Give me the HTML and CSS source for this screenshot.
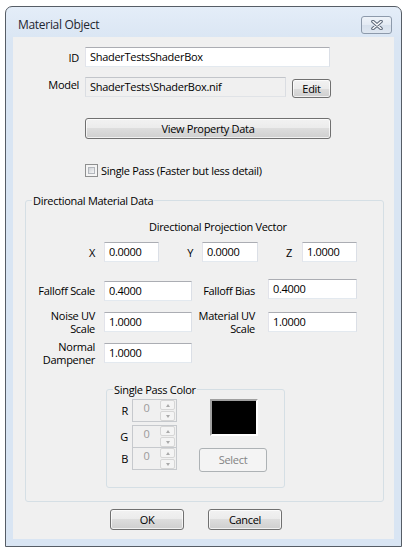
FILE: index.html
```html
<!DOCTYPE html>
<html>
<head>
<meta charset="utf-8">
<link rel="stylesheet" href="styles.css">
</head>
<body>
<div class="window">
  <div class="titlebar">
    <span class="title">Material Object</span>
    <div class="close">
      <svg width="14" height="10" viewBox="0 0 14 10">
        <path d="M3 1.5 L11 8.5 M11 1.5 L3 8.5" stroke="#5b6778" stroke-width="3.6" stroke-linecap="round"/>
        <path d="M3 1.5 L11 8.5 M11 1.5 L3 8.5" stroke="#fbfcfd" stroke-width="1.6" stroke-linecap="round"/>
      </svg>
    </div>
  </div>
  <div class="client">
    <div class="row">
      <span class="lbl w66">ID</span>
      <div class="tb w245">ShaderTestsShaderBox</div>
    </div>
    <div class="row row-model">
      <span class="lbl w66">Model</span>
      <div class="tb ro w201">ShaderTests\ShaderBox.nif</div>
      <div class="btn btn-edit">Edit</div>
    </div>
    <div class="btn btn-view">View Property Data</div>
    <div class="check-row">
      <span class="checkbox"><span class="checkbox-inner"></span></span>
      <span class="check-text">Single Pass (Faster but less detail)</span>
    </div>

    <div class="group group-main">
      <span class="legend">Directional Material Data</span>
      <div class="vec-title">Directional Projection Vector</div>
      <div class="row row-xyz">
        <span class="lbl w69 mr9">X</span>
        <div class="tb w55">0.0000</div>
        <span class="lbl w34 mr9">Y</span>
        <div class="tb w56">0.0000</div>
        <span class="lbl w34 mr10">Z</span>
        <div class="tb w55">1.0000</div>
      </div>
      <div class="row row-falloff">
        <span class="lbl w69 mr9 lh20">Falloff Scale</span>
        <div class="tb w88">0.4000</div>
        <span class="lbl w63 mr13 lh20">Falloff Bias</span>
        <div class="tb w89 up2">0.4000</div>
      </div>
      <div class="row row-noise">
        <span class="lbl w69 mr9 two">Noise UV<br>Scale</span>
        <div class="tb w88">1.0000</div>
        <span class="lbl w63 mr13 two">Material UV<br>Scale</span>
        <div class="tb w89">1.0000</div>
      </div>
      <div class="row row-normal">
        <span class="lbl w69 mr9 two">Normal<br>Dampener</span>
        <div class="tb w88">1.0000</div>
      </div>

      <div class="group group-color">
        <span class="legend">Single Pass Color</span>
        <div class="color-body">
          <div class="spins">
            <div class="spin-row spin-r">
              <span class="spin-lbl">R</span>
              <div class="spin"><span class="spin-val">0</span><span class="spin-btns"><span class="sb"><span class="arr-up"></span></span><span class="sb"><span class="arr-down"></span></span></span></div>
            </div>
            <div class="spin-row spin-g">
              <span class="spin-lbl">G</span>
              <div class="spin"><span class="spin-val">0</span><span class="spin-btns"><span class="sb"><span class="arr-up"></span></span><span class="sb"><span class="arr-down"></span></span></span></div>
            </div>
            <div class="spin-row spin-b">
              <span class="spin-lbl">B</span>
              <div class="spin"><span class="spin-val">0</span><span class="spin-btns"><span class="sb"><span class="arr-up"></span></span><span class="sb"><span class="arr-down"></span></span></span></div>
            </div>
          </div>
          <div class="swatch-col">
            <div class="swatch"></div>
            <div class="btn btn-select">Select</div>
          </div>
        </div>
      </div>
    </div>

    <div class="actions">
      <div class="btn btn-ok">OK</div>
      <div class="btn btn-cancel">Cancel</div>
    </div>
  </div>
</div>
</body>
</html>
```

FILE: styles.css
```css
* { box-sizing: border-box; }

body {
  margin: 0;
  background: #ffffff;
  font-family: "Open Sans", "Noto Sans", sans-serif;
  font-size: 11px;
  letter-spacing: -0.3px;
  color: #000;
}

.window {
  margin: 6px 0 0 5px;
  width: 397px;
  height: 541px;
  border: 1px solid #565d66;
  border-radius: 7px 7px 0 0;
  background: linear-gradient(#e4edf8 0px, #d9e5f3 36px);
  padding: 0 7px 7px;
  display: flex;
  flex-direction: column;
}

.titlebar {
  height: 30px;
  flex: none;
  display: flex;
  align-items: flex-start;
  justify-content: space-between;
}

.title {
  margin: 10px 0 0 5px;
  line-height: 15px;
  font-size: 12px;
  color: #1e2630;
}

.close {
  margin: 9px 2px 0 0;
  width: 31px;
  height: 18px;
  border: 1px solid #8d9aab;
  border-radius: 3px;
  background: linear-gradient(#eef3f9, #e3eaf3 50%, #d6e0ec 50%, #dfe7f1);
  display: flex;
  align-items: center;
  justify-content: center;
}

.client {
  height: 502px;
  background: #f0f0f0;
  padding-top: 10px;
  display: flex;
  flex-direction: column;
  align-items: flex-start;
}

.row { display: flex; align-items: center; }

.lbl { flex: none; text-align: right; white-space: nowrap; }
.w66 { width: 66px; margin-right: 6px; }
.w69 { width: 69px; }
.w34 { width: 34px; }
.w63 { width: 63px; }
.mr9 { margin-right: 9px; }
.mr10 { margin-right: 10px; }
.mr13 { margin-right: 13px; }
.lh20 { line-height: 20px; }
.two { line-height: 13px; }

.tb {
  flex: none;
  height: 20px;
  border: 1px solid;
  border-color: #abadb3 #dbdfe6 #e3e9ef #e2e3ea;
  background: #fff;
  padding: 0 4px;
  line-height: 18px;
  white-space: nowrap;
}
.tb.ro { background: #f0f0f0; border-color: #c2c5ca #dadde2 #e0e3e7 #dadde2; }
.w245 { width: 245px; }
.w201 { width: 201px; }
.w55 { width: 55px; }
.w56 { width: 56px; }
.w88 { width: 88px; }
.w89 { width: 89px; }
.up2 { margin-top: -2px; }

.btn {
  flex: none;
  border: 1px solid #707070;
  border-radius: 3px;
  background: linear-gradient(#f2f2f2 0%, #ebebeb 50%, #dddddd 50%, #cfcfcf 100%);
  box-shadow: inset 0 0 0 1px rgba(255,255,255,0.7);
  text-align: center;
  white-space: nowrap;
}

.row-model { margin-top: 10px; align-items: flex-start; }
.btn-edit { margin: 2px 0 0 6px; width: 39px; height: 19px; line-height: 17px; }
.btn-view { margin: 20px 0 0 72px; width: 246px; height: 21px; line-height: 19px; }

.check-row { margin: 25px 0 0 72px; display: flex; align-items: center; height: 13px; }
.checkbox {
  width: 13px; height: 13px;
  border: 1px solid #8e8f8f;
  background: #f4f4f4;
  padding: 2px;
  display: block;
}
.checkbox-inner {
  display: block;
  width: 7px; height: 7px;
  border: 1px solid #b3b7bd;
  background: linear-gradient(135deg, #cfd2d7, #f5f5f5);
}
.check-text { margin-left: 3px; line-height: 15px; }

.group {
  border: 1px solid #d5dfe5;
  border-radius: 3px;
}
.legend {
  display: block;
  width: max-content;
  margin: -8px 0 0 6px;
  padding: 0 1px;
  line-height: 15px;
  background: #f0f0f0;
}

.group-main {
  margin: 23px 0 0 12px;
  width: 359px;
  padding-bottom: 13px;
}
.vec-title { margin-top: 11px; padding-left: 123px; line-height: 15px; }
.row-xyz { margin-top: 8px; }
.row-falloff { margin-top: 19px; align-items: flex-start; }
.row-noise { margin-top: 8px; }
.row-normal { margin-top: 5px; }

.group-color {
  margin: 23px 0 0 80px;
  width: 179px;
  padding-bottom: 15px;
}
.color-body { display: flex; margin-top: 2px; }
.spins { display: flex; flex-direction: column; }
.spin-row { display: flex; align-items: center; }
.spin-g { margin-top: 3px; }
.spin-b { margin-top: -1px; }
.spin-lbl { width: 21px; margin-right: 4px; text-align: right; line-height: 15px; }
.spin {
  width: 45px; height: 23px;
  border: 1px solid #c6c9cd;
  background: #f0f0f0;
  display: flex;
  align-items: flex-start;
}
.spin-val { flex: 1; text-align: center; color: #9a9a9a; line-height: 15px; }
.spin-btns { width: 15px; display: flex; flex-direction: column; margin: 0 1px 0 0; }
.sb {
  height: 10px;
  border: 1px solid #d6d6d6;
  border-radius: 2px;
  background: #f4f4f4;
  display: flex;
  align-items: center;
  justify-content: center;
  margin-bottom: 1px;
}
.arr-up { width: 0; height: 0; border-left: 2.5px solid transparent; border-right: 2.5px solid transparent; border-bottom: 3px solid #a9a9a9; }
.arr-down { width: 0; height: 0; border-left: 2.5px solid transparent; border-right: 2.5px solid transparent; border-top: 3px solid #a9a9a9; }

.swatch-col { margin-left: 22px; display: flex; flex-direction: column; align-items: flex-start; }
.swatch {
  margin-left: 11px;
  width: 48px; height: 37px;
  border: 2px solid;
  border-color: #a0a0a0 #ffffff #ffffff #a0a0a0;
  background: #000;
}
.btn-select {
  margin-top: 12px;
  width: 68px; height: 24px; line-height: 22px;
  border-color: #adb2b5;
  background: #f4f4f4;
  box-shadow: none;
  color: #838383;
}

.actions { display: flex; margin: 7px 0 0 97px; }
.btn-ok, .btn-cancel { width: 74px; height: 21px; line-height: 19px; }
.btn-cancel { margin-left: 24px; }
```
